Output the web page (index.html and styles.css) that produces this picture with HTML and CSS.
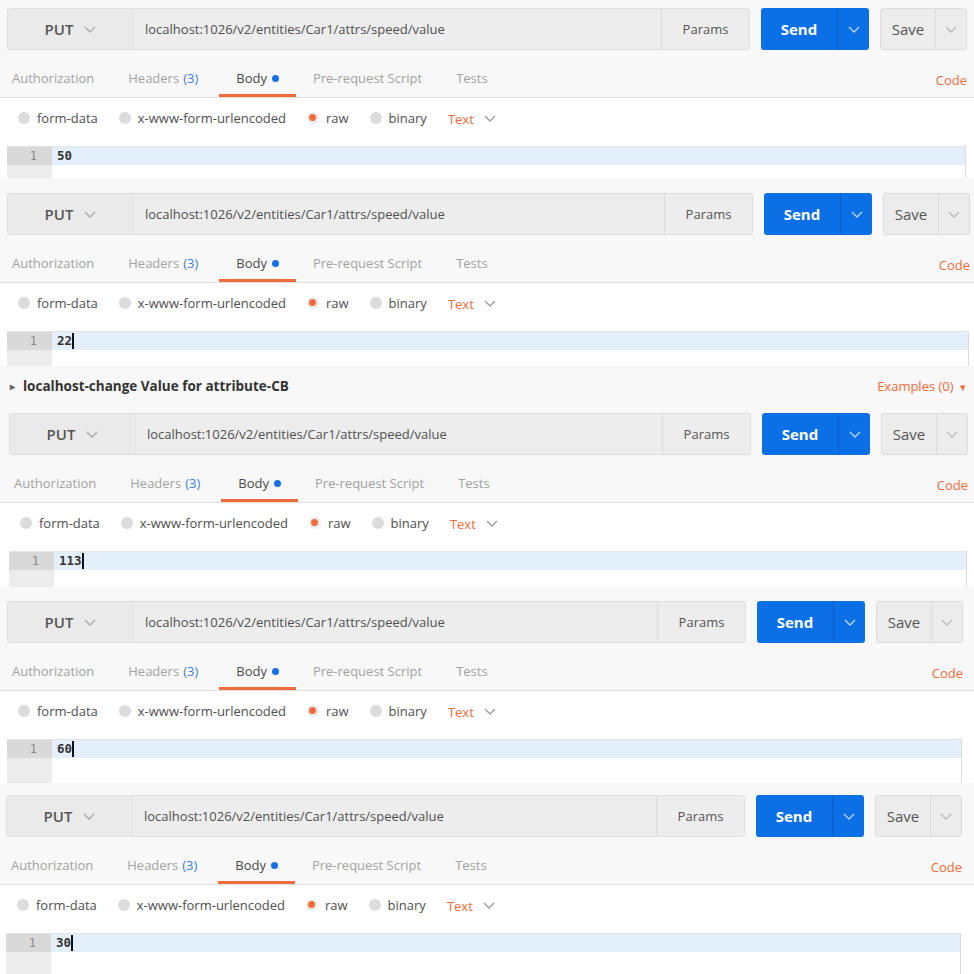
FILE: index.html
```html
<!DOCTYPE html>
<html>
<head>
<meta charset="utf-8">
<link rel="stylesheet" href="styles.css">
</head>
<body>

<section class="panel p1">
  <div class="head">
    <div class="toolbar">
      <div class="req">
        <div class="method"><span>PUT</span><svg class="chev" viewBox="0 0 12 7"><path d="M1 1l5 5 5-5"/></svg></div>
        <div class="url">localhost:1026/v2/entities/Car1/attrs/speed/value</div>
        <div class="params">Params</div>
      </div>
      <div class="send"><span class="send-main">Send</span><span class="send-arrow"><svg class="chev" viewBox="0 0 12 7"><path d="M1 1l5 5 5-5"/></svg></span></div>
      <div class="save"><span class="save-main">Save</span><span class="save-arrow"><svg class="chev" viewBox="0 0 12 7"><path d="M1 1l5 5 5-5"/></svg></span></div>
    </div>
    <div class="tabs">
      <span class="tab">Authorization</span>
      <span class="tab">Headers <span class="count">(3)</span></span>
      <span class="tab active">Body<i class="dot"></i></span>
      <span class="tab">Pre-request Script</span>
      <span class="tab">Tests</span>
      <span class="code">Code</span>
    </div>
  </div>
  <div class="body">
    <div class="modes">
      <span class="mode"><i class="radio"></i>form-data</span>
      <span class="mode"><i class="radio"></i>x-www-form-urlencoded</span>
      <span class="mode"><i class="radio on"></i>raw</span>
      <span class="mode"><i class="radio"></i>binary</span>
      <span class="fmt">Text<svg class="chev" viewBox="0 0 12 7"><path d="M1 1l5 5 5-5"/></svg></span>
    </div>
    <div class="editor">
      <div class="gutter"><div class="ln">1</div></div>
      <div class="lines"><div class="line">50</div></div>
    </div>
  </div>
</section>

<section class="panel p2">
  <div class="head">
    <div class="toolbar">
      <div class="req">
        <div class="method"><span>PUT</span><svg class="chev" viewBox="0 0 12 7"><path d="M1 1l5 5 5-5"/></svg></div>
        <div class="url">localhost:1026/v2/entities/Car1/attrs/speed/value</div>
        <div class="params">Params</div>
      </div>
      <div class="send"><span class="send-main">Send</span><span class="send-arrow"><svg class="chev" viewBox="0 0 12 7"><path d="M1 1l5 5 5-5"/></svg></span></div>
      <div class="save"><span class="save-main">Save</span><span class="save-arrow"><svg class="chev" viewBox="0 0 12 7"><path d="M1 1l5 5 5-5"/></svg></span></div>
    </div>
    <div class="tabs">
      <span class="tab">Authorization</span>
      <span class="tab">Headers <span class="count">(3)</span></span>
      <span class="tab active">Body<i class="dot"></i></span>
      <span class="tab">Pre-request Script</span>
      <span class="tab">Tests</span>
      <span class="code">Code</span>
    </div>
  </div>
  <div class="body">
    <div class="modes">
      <span class="mode"><i class="radio"></i>form-data</span>
      <span class="mode"><i class="radio"></i>x-www-form-urlencoded</span>
      <span class="mode"><i class="radio on"></i>raw</span>
      <span class="mode"><i class="radio"></i>binary</span>
      <span class="fmt">Text<svg class="chev" viewBox="0 0 12 7"><path d="M1 1l5 5 5-5"/></svg></span>
    </div>
    <div class="editor">
      <div class="gutter"><div class="ln">1</div></div>
      <div class="lines"><div class="line">22<i class="caret"></i></div></div>
    </div>
  </div>
</section>

<section class="panel p3">
  <div class="head">
    <div class="title-row">
      <span class="title"><span class="tri">&#9656;</span>localhost-change Value for attribute-CB</span>
      <span class="examples">Examples (0) <span class="tri-down">&#9662;</span></span>
    </div>
    <div class="toolbar">
      <div class="req">
        <div class="method"><span>PUT</span><svg class="chev" viewBox="0 0 12 7"><path d="M1 1l5 5 5-5"/></svg></div>
        <div class="url">localhost:1026/v2/entities/Car1/attrs/speed/value</div>
        <div class="params">Params</div>
      </div>
      <div class="send"><span class="send-main">Send</span><span class="send-arrow"><svg class="chev" viewBox="0 0 12 7"><path d="M1 1l5 5 5-5"/></svg></span></div>
      <div class="save"><span class="save-main">Save</span><span class="save-arrow"><svg class="chev" viewBox="0 0 12 7"><path d="M1 1l5 5 5-5"/></svg></span></div>
    </div>
    <div class="tabs">
      <span class="tab">Authorization</span>
      <span class="tab">Headers <span class="count">(3)</span></span>
      <span class="tab active">Body<i class="dot"></i></span>
      <span class="tab">Pre-request Script</span>
      <span class="tab">Tests</span>
      <span class="code">Code</span>
    </div>
  </div>
  <div class="body">
    <div class="modes">
      <span class="mode"><i class="radio"></i>form-data</span>
      <span class="mode"><i class="radio"></i>x-www-form-urlencoded</span>
      <span class="mode"><i class="radio on"></i>raw</span>
      <span class="mode"><i class="radio"></i>binary</span>
      <span class="fmt">Text<svg class="chev" viewBox="0 0 12 7"><path d="M1 1l5 5 5-5"/></svg></span>
    </div>
    <div class="editor">
      <div class="gutter"><div class="ln">1</div></div>
      <div class="lines"><div class="line">113<i class="caret"></i></div></div>
    </div>
  </div>
</section>

<section class="panel p4">
  <div class="head">
    <div class="toolbar">
      <div class="req">
        <div class="method"><span>PUT</span><svg class="chev" viewBox="0 0 12 7"><path d="M1 1l5 5 5-5"/></svg></div>
        <div class="url">localhost:1026/v2/entities/Car1/attrs/speed/value</div>
        <div class="params">Params</div>
      </div>
      <div class="send"><span class="send-main">Send</span><span class="send-arrow"><svg class="chev" viewBox="0 0 12 7"><path d="M1 1l5 5 5-5"/></svg></span></div>
      <div class="save"><span class="save-main">Save</span><span class="save-arrow"><svg class="chev" viewBox="0 0 12 7"><path d="M1 1l5 5 5-5"/></svg></span></div>
    </div>
    <div class="tabs">
      <span class="tab">Authorization</span>
      <span class="tab">Headers <span class="count">(3)</span></span>
      <span class="tab active">Body<i class="dot"></i></span>
      <span class="tab">Pre-request Script</span>
      <span class="tab">Tests</span>
      <span class="code">Code</span>
    </div>
  </div>
  <div class="body">
    <div class="modes">
      <span class="mode"><i class="radio"></i>form-data</span>
      <span class="mode"><i class="radio"></i>x-www-form-urlencoded</span>
      <span class="mode"><i class="radio on"></i>raw</span>
      <span class="mode"><i class="radio"></i>binary</span>
      <span class="fmt">Text<svg class="chev" viewBox="0 0 12 7"><path d="M1 1l5 5 5-5"/></svg></span>
    </div>
    <div class="editor">
      <div class="gutter"><div class="ln">1</div></div>
      <div class="lines"><div class="line">60<i class="caret"></i></div></div>
    </div>
  </div>
</section>

<section class="panel p5">
  <div class="head">
    <div class="toolbar">
      <div class="req">
        <div class="method"><span>PUT</span><svg class="chev" viewBox="0 0 12 7"><path d="M1 1l5 5 5-5"/></svg></div>
        <div class="url">localhost:1026/v2/entities/Car1/attrs/speed/value</div>
        <div class="params">Params</div>
      </div>
      <div class="send"><span class="send-main">Send</span><span class="send-arrow"><svg class="chev" viewBox="0 0 12 7"><path d="M1 1l5 5 5-5"/></svg></span></div>
      <div class="save"><span class="save-main">Save</span><span class="save-arrow"><svg class="chev" viewBox="0 0 12 7"><path d="M1 1l5 5 5-5"/></svg></span></div>
    </div>
    <div class="tabs">
      <span class="tab">Authorization</span>
      <span class="tab">Headers <span class="count">(3)</span></span>
      <span class="tab active">Body<i class="dot"></i></span>
      <span class="tab">Pre-request Script</span>
      <span class="tab">Tests</span>
      <span class="code">Code</span>
    </div>
  </div>
  <div class="body">
    <div class="modes">
      <span class="mode"><i class="radio"></i>form-data</span>
      <span class="mode"><i class="radio"></i>x-www-form-urlencoded</span>
      <span class="mode"><i class="radio on"></i>raw</span>
      <span class="mode"><i class="radio"></i>binary</span>
      <span class="fmt">Text<svg class="chev" viewBox="0 0 12 7"><path d="M1 1l5 5 5-5"/></svg></span>
    </div>
    <div class="editor">
      <div class="gutter"><div class="ln">1</div></div>
      <div class="lines"><div class="line">30<i class="caret"></i></div></div>
    </div>
  </div>
</section>

</body>
</html>
```

FILE: styles.css
```css
* { box-sizing: border-box; margin: 0; padding: 0; }

html, body { width: 974px; height: 974px; overflow: hidden; }

body {
  background: #f7f7f7;
  font-family: "Open Sans", "Noto Sans", sans-serif;
  font-size: 13px;
  color: #505050;
}

.panel { --l: 7px; --r: 7px; --pt: 8px; --eh: 32px; }
.p1 { --l: 7px; --r: 7px; --pt: 8px; --eh: 32px; }
.p2 { --l: 7px; --r: 4px; --pt: 15px; --eh: 35px; }
.p3 { --l: 9px; --r: 6px; --pt: 0px; --eh: 36px; }
.p4 { --l: 7px; --r: 11px; --pt: 14px; --eh: 44px; }
.p5 { --l: 6px; --r: 12px; --pt: 12px; --eh: 48px; }

.head {
  background: #f8f8f8;
  border-bottom: 1px solid #e0e0e0;
  padding: var(--pt) var(--r) 0 var(--l);
}

/* title row (panel 3) */
.title-row {
  height: 40px;
  display: flex;
  align-items: center;
  justify-content: space-between;
  margin-left: calc(1px - var(--l));
  margin-right: 2px;
  margin-bottom: 7px;
}
.title {
  font-weight: 700;
  font-size: 13.5px;
  color: #333;
  display: flex;
  align-items: center;
}
.tri { font-size: 10px; color: #666; width: 22px; padding-left: 9px; }
.examples { color: #f26b3a; font-size: 13px; }
.tri-down { font-size: 11px; margin-left: 3px; }

/* toolbar */
.toolbar { display: flex; height: 42px; }
.req {
  flex: 1;
  display: flex;
  background: #ededed;
  border: 1px solid #dedede;
  border-radius: 3px;
}
.method {
  width: 126px;
  display: flex;
  align-items: center;
  justify-content: center;
  gap: 11px;
  background: #eaeaea;
  border-right: 1px solid #e4e4e4;
  font-size: 15px;
  font-weight: 600;
  color: #555;
}
.chev { width: 12px; height: 7px; fill: none; stroke: #a8a8a8; stroke-width: 1.3; }
.url {
  flex: 1;
  display: flex;
  align-items: center;
  padding-left: 11px;
  font-size: 13px;
  color: #505050;
}
.params {
  width: 88px;
  display: flex;
  align-items: center;
  justify-content: center;
  border-left: 1px solid #dadada;
  font-size: 13px;
  color: #555;
}
.send {
  margin-left: 11px;
  width: 108px;
  display: flex;
  background: #0b6fe6;
  border-radius: 3px;
  color: #fff;
}
.send-main {
  width: 76px;
  display: flex;
  align-items: center;
  justify-content: center;
  font-size: 15px;
  font-weight: 700;
}
.send-arrow {
  flex: 1;
  display: flex;
  align-items: center;
  justify-content: center;
  border-left: 1px solid #0a5cc0;
}
.send-arrow .chev { stroke: #bcd6f8; }
.save {
  margin-left: 11px;
  width: 87px;
  display: flex;
  background: #ececec;
  border: 1px solid #dcdcdc;
  border-radius: 3px;
}
.save-main {
  width: 54px;
  display: flex;
  align-items: center;
  justify-content: center;
  font-size: 15px;
  color: #555;
}
.save-arrow {
  flex: 1;
  display: flex;
  align-items: center;
  justify-content: center;
  border-left: 1px solid #dcdcdc;
}
.save-arrow .chev { stroke: #b8b8b8; }

/* tabs */
.tabs {
  height: 47px;
  display: flex;
  align-items: flex-end;
  margin-left: -12px;
}
.tab {
  height: 35px;
  line-height: 32px;
  padding: 0 17px;
  border-bottom: 3px solid transparent;
  color: #a2a2a2;
  display: flex;
  align-items: center;
  white-space: nowrap;
}
.tab .count { color: #3d7fd9; margin-left: 4px; margin-right: 4px; }
.tab.active { color: #4a4a4a; border-bottom-color: #f26b3a; }
.dot {
  display: inline-block;
  width: 7px;
  height: 7px;
  border-radius: 50%;
  background: #1670e4;
  margin-left: 5px;
}
.code {
  margin-left: auto;
  color: #f26b3a;
  font-size: 13px;
  line-height: 32px;
  height: 33px;
}

/* body */
.body {
  background: #fff;
  padding: 0 calc(var(--r) + 1px) 0 var(--l);
}
.modes {
  height: 39px;
  display: flex;
  align-items: center;
  padding-left: 11px;
  margin-bottom: 9px;
}
.mode {
  display: flex;
  align-items: center;
  margin-right: 21px;
  color: #505050;
}
.radio {
  display: inline-block;
  width: 12px;
  height: 12px;
  border-radius: 50%;
  background: #dcdcdc;
  margin-right: 7px;
  position: relative;
}
.radio.on { background: #ececec; }
.radio.on::after {
  content: "";
  position: absolute;
  left: 2.5px;
  top: 2.5px;
  width: 7px;
  height: 7px;
  border-radius: 50%;
  background: #f26b3a;
}
.fmt {
  display: flex;
  align-items: center;
  gap: 10px;
  color: #f26b3a;
  padding-top: 2px;
}
.fmt .chev { stroke: #9a9a9a; }

/* editor */
.editor {
  display: flex;
  height: var(--eh);
  border-top: 1px solid #e4e4e4;
  border-right: 1px solid #dcdcdc;
}
.gutter {
  width: 45px;
  background: #ececec;
}
.ln {
  height: 18px;
  line-height: 18px;
  background: #d9d9d9;
  text-align: right;
  padding-right: 15px;
  font-family: "DejaVu Sans Mono", monospace;
  font-size: 12px;
  color: #8a8a8a;
}
.lines { flex: 1; }
.line {
  height: 18px;
  line-height: 18px;
  background: #e4effc;
  padding-left: 5px;
  font-family: "DejaVu Sans Mono", monospace;
  font-size: 12.5px;
  font-weight: 700;
  color: #333;
  display: flex;
  align-items: center;
}
.caret {
  display: inline-block;
  width: 2px;
  height: 16px;
  background: #111;
}
```
